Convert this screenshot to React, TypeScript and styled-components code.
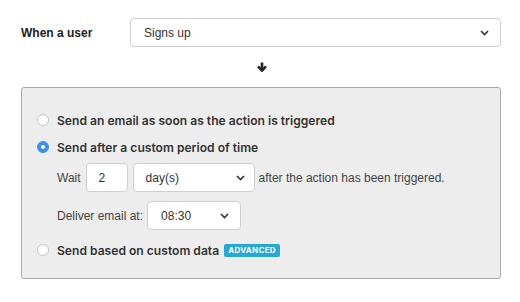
import React from "react";
import styled, { createGlobalStyle } from "styled-components";

const Global = createGlobalStyle`
  html, body { margin: 0; padding: 0; background: #fff; }
  body { font-family: "Liberation Sans", Arial, sans-serif; color: #333; }
  * { box-sizing: border-box; }
`;

const Page = styled.div`
  width: 520px;
  padding: 18px 19px 0 21px;
  display: flex;
  flex-direction: column;
`;

const TopRow = styled.div`
  display: flex;
  align-items: center;
`;

const TopLabel = styled.div`
  width: 109px;
  font-weight: bold;
  font-size: 12px;
  color: #222;
`;

const SelectBox = styled.div<{ $w?: number; $pl?: number; $pr?: number }>`
  ${(p) => (p.$w ? `width: ${p.$w}px;` : "flex: 1;")}
  height: 29px;
  border: 1px solid #cfcfcf;
  border-radius: 4px;
  background: #fff;
  display: flex;
  align-items: center;
  justify-content: space-between;
  padding: 0 ${(p) => p.$pr ?? 9}px 0 ${(p) => p.$pl ?? 12}px;
  font-size: 12px;
  color: #333;
  flex-shrink: 0;
`;

const Chevron = () => (
  <svg width="9" height="6" viewBox="0 0 9 6">
    <path d="M1 1 L4.5 4.5 L8 1" fill="none" stroke="#333" strokeWidth="1.6" />
  </svg>
);

const ArrowRow = styled.div`
  height: 40px;
  display: flex;
  align-items: center;
  justify-content: center;
  padding-left: 1px;
`;

const Panel = styled.div`
  height: 192px;
  background: #ededed;
  border: 1px solid #aaaaaa;
  border-radius: 3px;
  padding: 24px 15px 0 15px;
  display: flex;
  flex-direction: column;
`;

const RadioRow = styled.div<{ $mt?: number }>`
  display: flex;
  align-items: center;
  gap: 8px;
  height: 16px;
  margin-top: ${(p) => p.$mt ?? 0}px;
`;

const Radio = styled.span<{ $on?: boolean }>`
  width: 12px;
  height: 12px;
  border-radius: 50%;
  flex-shrink: 0;
  background: ${(p) => (p.$on ? "#3a8ff0" : "#fff")};
  border: 1px solid ${(p) => (p.$on ? "#3a8ff0" : "#c4c4c4")};
  display: flex;
  align-items: center;
  justify-content: center;
  &::after {
    content: "";
    width: 4px;
    height: 4px;
    border-radius: 50%;
    background: ${(p) => (p.$on ? "#fff" : "transparent")};
  }
`;

const RadioLabel = styled.span`
  font-family: Inter, "Liberation Sans", sans-serif;
  font-weight: 600;
  font-size: 12.1px;
  color: #333;
`;

const Badge = styled.span`
  margin-left: -3px;
  height: 13px;
  padding: 0 4px;
  border-radius: 2px;
  background: #28a8d6;
  color: #fff;
  font-family: Inter, "Liberation Sans", sans-serif;
  font-weight: 700;
  font-size: 8px;
  letter-spacing: 0.3px;
  display: flex;
  align-items: center;
`;

const SubRow = styled.div<{ $mt: number }>`
  display: flex;
  align-items: center;
  padding-left: 20px;
  margin-top: ${(p) => p.$mt}px;
  font-size: 12px;
  color: #444;
`;

const InlineText = styled.span<{ $ml?: number; $mr?: number }>`
  margin-left: ${(p) => p.$ml ?? 0}px;
  margin-right: ${(p) => p.$mr ?? 0}px;
`;

const NumInput = styled.div`
  width: 42px;
  height: 29px;
  border: 1px solid #cfcfcf;
  border-radius: 4px;
  background: #fff;
  display: flex;
  align-items: center;
  padding-left: 12px;
  font-size: 12px;
  color: #333;
  margin-right: 5px;
`;

export default function App() {
  return (
    <>
      <Global />
      <Page>
        <TopRow>
          <TopLabel>When a user</TopLabel>
          <SelectBox $pl={13} $pr={11}>
            <span>Signs up</span>
            <Chevron />
          </SelectBox>
        </TopRow>
        <ArrowRow>
          <svg width="10" height="10" viewBox="0 0 10 10">
            <path d="M5 0.5 V8" stroke="#222" strokeWidth="2.6" />
            <path d="M1 4.4 L5 8.6 L9 4.4" fill="none" stroke="#222" strokeWidth="2.6" />
          </svg>
        </ArrowRow>
        <Panel>
          <RadioRow>
            <Radio />
            <RadioLabel>Send an email as soon as the action is triggered</RadioLabel>
          </RadioRow>
          <RadioRow $mt={11}>
            <Radio $on />
            <RadioLabel>Send after a custom period of time</RadioLabel>
          </RadioRow>
          <SubRow $mt={8}>
            <InlineText $mr={5}>Wait</InlineText>
            <NumInput>2</NumInput>
            <SelectBox $w={122}>
              <span>day(s)</span>
              <Chevron />
            </SelectBox>
            <InlineText $ml={4}>after the action has been triggered.</InlineText>
          </SubRow>
          <SubRow $mt={9}>
            <InlineText $mr={4}>Deliver email at:</InlineText>
            <SelectBox $w={94} $pl={13} $pr={11}>
              <span>08:30</span>
              <Chevron />
            </SelectBox>
          </SubRow>
          <RadioRow $mt={12}>
            <Radio />
            <RadioLabel>Send based on custom data</RadioLabel>
            <Badge>ADVANCED</Badge>
          </RadioRow>
        </Panel>
      </Page>
    </>
  );
}
